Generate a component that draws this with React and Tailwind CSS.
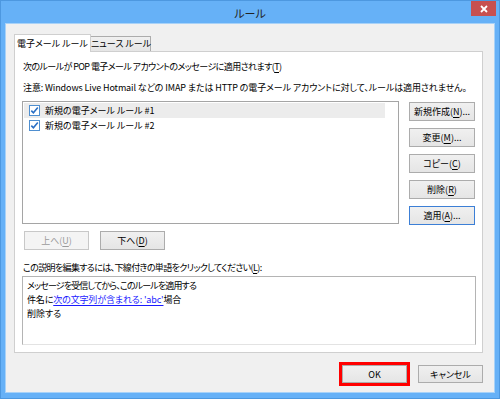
import React from 'react';

const font = "font-['Noto_Sans_CJK_JP',sans-serif] [font-feature-settings:'palt']";

function Mn({ children }) {
  return <span className="underline underline-offset-2">{children}</span>;
}

function Btn({ children, focused, disabled, className = '' }) {
  return (
    <div
      className={`flex items-center justify-center border text-[9px] leading-none ${
        focused
          ? 'border-[#3c7fd6] bg-gradient-to-b from-[#f0f0f0] to-[#e5e5e5] text-black'
          : disabled
          ? 'border-[#c8c8c8] bg-[#f4f4f4] text-[#9a9a9a]'
          : 'border-[#acacac] bg-gradient-to-b from-[#f0f0f0] to-[#e5e5e5] text-black'
      } ${className}`}
    >
      {children}
    </div>
  );
}

function Check() {
  return (
    <svg width="11" height="11" viewBox="0 0 11 11" className="shrink-0">
      <rect x="0.5" y="0.5" width="10" height="10" fill="#fff" stroke="#4f8fd0" />
      <path d="M2.3 5.6 L4.4 7.8 L8.8 2.6" fill="none" stroke="#2a6fc4" strokeWidth="1.6" />
    </svg>
  );
}

export default function App() {
  const rules = ['新規の電子メール ルール #1', '新規の電子メール ルール #2'];
  const sideButtons = [
    ['新規作成(', 'N', ')...'],
    ['変更(', 'M', ')...'],
    ['コピー(', 'C', ')'],
    ['削除(', 'R', ')'],
    ['適用(', 'A', ')...'],
  ];

  return (
    <div className={`w-[500px] h-[399px] bg-[#66b1f7] border border-[#4d98e0] flex flex-col text-black ${font}`}>
      {/* Title bar */}
      <div className="h-[22px] grid grid-cols-[1fr_auto_1fr] items-start">
        <div />
        <div className="text-[11px] leading-[24px] text-[#222]">ルール</div>
        <div className="flex justify-end pr-[3px]">
          <div className="w-[25px] h-[15px] bg-[#c75050] flex items-center justify-center">
            <svg width="8" height="8" viewBox="0 0 8 8">
              <path d="M1 1 L7 7 M7 1 L1 7" stroke="#fff" strokeWidth="1.8" />
            </svg>
          </div>
        </div>
      </div>

      {/* Dialog body */}
      <div className="flex-1 mx-[4px] mb-[5px] bg-[#f0f0f0] border border-[#a8d2f8] flex flex-col pl-[8px] pr-[11px] pt-[9px] pb-[9px]">
        {/* Tabs */}
        <div className="flex items-end h-[18px] relative z-10">
          <div className="h-[18px] w-[77px] bg-white border border-b-0 border-[#cfcfcf] text-[9px] leading-[17px] text-center whitespace-nowrap -mb-px">
            電子メール ルール
          </div>
          <div className="h-[15px] w-[60px] bg-gradient-to-b from-[#f0f0f0] to-[#e5e5e5] border border-b-0 border-l-0 border-[#acacac] text-[9px] leading-[14px] text-center whitespace-nowrap">
            ニュース ルール
          </div>
        </div>

        {/* Tab panel */}
        <div className="h-[302px] bg-white border border-[#cfcfcf] flex flex-col pl-[7px] pr-[4px] pt-[8px] text-[9px]">
          <div className="leading-[14px] pl-[1px] whitespace-nowrap tracking-[-0.58px]">
            次のルールが POP 電子メール アカウントのメッセージに適用されます(<Mn>T</Mn>)
          </div>
          <div className="leading-[14px] pl-[1px] mt-[7px] whitespace-nowrap tracking-[-0.11px]">
            注意: Windows Live Hotmail などの IMAP または HTTP の電子メール アカウントに対して、ルールは適用されません。
          </div>

          <div className="flex gap-[10px] mt-[6px]">
            <div className="w-[377px] h-[123px] border border-[#a5a5a5] bg-white pt-[1px] pl-[1px]">
              {rules.map((r, i) => (
                <div
                  key={r}
                  className={`w-[361px] h-[15px] flex items-center gap-[5px] pl-[5px] leading-none ${
                    i === 0 ? 'bg-[#ececec]' : ''
                  }`}
                >
                  <Check />
                  <span>{r}</span>
                </div>
              ))}
            </div>
            <div className="flex flex-col gap-[7px] pt-[1px]">
              {sideButtons.map(([a, m, b], i) => (
                <Btn key={m} focused={i === 4} className="w-[66px] h-[19px]">
                  {a}
                  <Mn>{m}</Mn>
                  {b}
                </Btn>
              ))}
            </div>
          </div>

          <div className="flex gap-[11px] mt-[6px] pl-[2px]">
            <Btn disabled className="w-[65px] h-[19px]">
              上へ(<Mn>U</Mn>)
            </Btn>
            <Btn className="w-[65px] h-[19px]">
              下へ(<Mn>D</Mn>)
            </Btn>
          </div>

          <div className="leading-[14px] pl-[1px] mt-[11px] whitespace-nowrap tracking-[-0.64px]">
            この説明を編集するには、下線付きの単語をクリックしてください(<Mn>L</Mn>):
          </div>

          <div className="w-[454px] h-[69px] mt-[1px] border border-[#b4b4b4] border-b-[#e3e3e3] bg-white pl-[4px] pt-[2px] leading-[14px]">
            <div className="tracking-[-0.85px]">メッセージを受信してから、このルールを適用する</div>
            <div className="tracking-[-0.14px]">
              件名に
              <span className="text-[#1a1aff] underline underline-offset-2">次の文字列が含まれる: 'abc'</span>
              場合
            </div>
            <div>削除する</div>
          </div>
        </div>

        {/* Bottom buttons */}
        <div className="flex-1 flex items-end justify-end gap-[8px]">
          <div className="border-[3px] border-[#ff0000] p-0 mb-[-3px]">
            <Btn className="w-[65px] h-[18px]">OK</Btn>
          </div>
          <Btn className="w-[65px] h-[18px]">キャンセル</Btn>
        </div>
      </div>
    </div>
  );
}
